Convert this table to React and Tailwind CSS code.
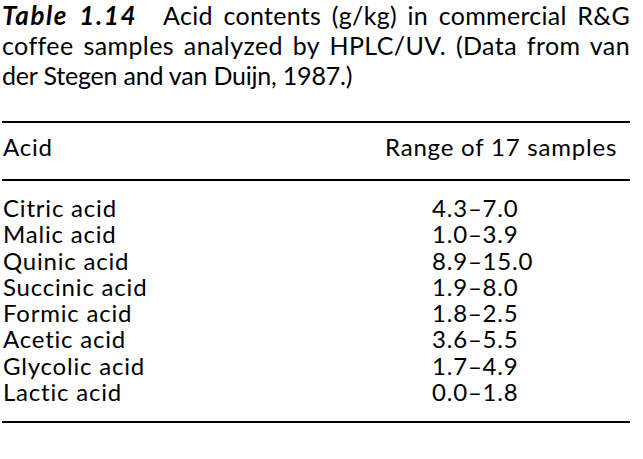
import React from 'react'

const rows = [
  ['Citric acid', '4.3–7.0'],
  ['Malic acid', '1.0–3.9'],
  ['Quinic acid', '8.9–15.0'],
  ['Succinic acid', '1.9–8.0'],
  ['Formic acid', '1.8–2.5'],
  ['Acetic acid', '3.6–5.5'],
  ['Glycolic acid', '1.7–4.9'],
  ['Lactic acid', '0.0–1.8'],
]

function App() {
  return (
    <div className="w-[643px] h-[459px] bg-white text-black font-['Lato','Open_Sans',sans-serif]">
      <div className="w-[630px] pl-[2px]">
        <div className="text-[25px] leading-[30px] whitespace-nowrap">
          <div className="[text-align-last:justify] tracking-[0.3px]">
            <span className="font-bold italic text-[26px] tracking-[1.6px]">Table 1.14</span>
            <span className="inline-block w-[26px]"></span>
            Acid contents (g/kg) in commercial R&amp;G
          </div>
          <div className="[text-align-last:justify] tracking-[0.4px]">
            coffee samples analyzed by HPLC/UV. (Data from van
          </div>
          <div className="tracking-[-0.2px]">der Stegen and van Duijn, 1987.)</div>
        </div>

        <div className="mt-[31px] border-t-2 border-black">
          <div className="flex text-[24px] tracking-[0.8px] leading-[26px] pt-[11px] pb-[19px]">
            <div className="w-[383px] pl-[1px]">Acid</div>
            <div>Range of 17 samples</div>
          </div>
        </div>

        <div className="border-t-2 border-black pt-[14px] pb-[16px]">
          {rows.map(([name, range]) => (
            <div key={name} className="flex text-[24px] tracking-[0.8px] leading-[26.3px]">
              <div className="w-[430px] pl-[1px]">{name}</div>
              <div>{range}</div>
            </div>
          ))}
        </div>

        <div className="border-t-2 border-black"></div>
      </div>
    </div>
  )
}

export default App
